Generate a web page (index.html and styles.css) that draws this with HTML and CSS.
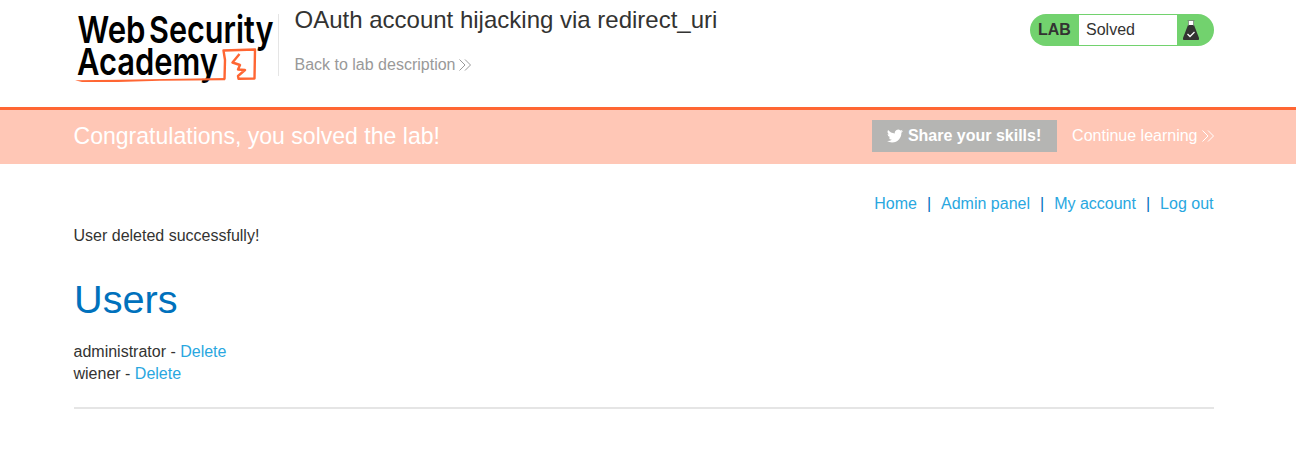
FILE: index.html
```html
<!DOCTYPE html>
<html lang="en">
<head>
<meta charset="utf-8">
<title>OAuth account hijacking via redirect_uri</title>
<link rel="stylesheet" href="styles.css">
</head>
<body>
<header class="lab-header">
  <div class="container header-row">
    <svg class="logo" width="204" height="84" viewBox="74 3 204 84" role="img" aria-label="Web Security Academy">
      <g class="logo-text">
        <text x="77.500" y="42.500" textLength="68" lengthAdjust="spacingAndGlyphs">Web</text>
        <text x="149" y="42.500" textLength="124.500" lengthAdjust="spacingAndGlyphs">Security</text>
        <text x="77" y="75" textLength="141" lengthAdjust="spacingAndGlyphs">Academy</text>
      </g>
      <path class="logo-rule" d="M75 80.300 L120 79.800 L225 78 L225 80.200 L160 80.800 L118 82 L82 82 Z"/>
      <path class="logo-box" d="M224.500 79.500 L225 60 L223.500 50.500 L255 49.500 L254.500 78.500 L238.500 78.800 L238 76 L245 70 L238 69.500 L240 65 L232.500 62.500 L239.500 54"/>
    </svg>
    <div class="title-block">
      <h2>OAuth account hijacking via redirect_uri</h2>
      <a class="back" href="#">Back to lab description<svg class="chevrons" width="12" height="12" viewBox="0 0 12 12"><path d="M.5.5 6 6 .5 11.500M6 .5 11.500 6 6 11.500"/></svg></a>
    </div>
    <div class="status">
      <span class="status-label">LAB</span>
      <span class="status-value">Solved</span>
      <svg class="flask" width="16" height="20" viewBox="0 0 16 20"><path fill="#fff" d="M5.500 1h5v5h-5z"/><path fill="#333332" d="M5 5h6l5 13q.4 2-1.500 2h-13Q-.4 20 0 18z"/><path fill="none" stroke="#777" stroke-width=".7" d="M4.500.5h7M5.500 1v5M10.500 1v5"/><path fill="none" stroke="#fff" stroke-width="1.300" d="M4.500 14 7 16.500 11.500 12"/></svg>
    </div>
  </div>
</header>
<section class="banner">
  <div class="container banner-row">
    <h4>Congratulations, you solved the lab!</h4>
    <a class="share" href="#"><svg width="16" height="16" viewBox="0 0 24 24"><path fill="#fff" d="M23.950 4.570a10 10 0 0 1-2.820.77 4.960 4.960 0 0 0 2.160-2.720c-.95.550-2 .95-3.130 1.180a4.920 4.920 0 0 0-8.380 4.480C7.690 8.100 4.070 6.130 1.640 3.160a4.930 4.930 0 0 0 1.520 6.570 4.900 4.900 0 0 1-2.230-.61v.06a4.920 4.920 0 0 0 3.950 4.830 5 5 0 0 1-2.210.08 4.940 4.940 0 0 0 4.600 3.420A9.870 9.870 0 0 1 0 19.540a13.990 13.990 0 0 0 7.550 2.210c9.050 0 14-7.500 14-13.980 0-.21 0-.42-.02-.63a9.940 9.940 0 0 0 2.460-2.550z"/></svg><span>Share your skills!</span></a>
    <a class="continue" href="#">Continue learning<svg class="chevrons" width="12" height="12" viewBox="0 0 12 12"><path d="M.5.5 6 6 .5 11.500M6 .5 11.500 6 6 11.500"/></svg></a>
  </div>
</section>
<main class="container">
  <nav class="links"><a href="#">Home</a><i>|</i><a href="#">Admin panel</a><i>|</i><a href="#">My account</a><i>|</i><a href="#">Log out</a></nav>
  <p class="message">User deleted successfully!</p>
  <h1>Users</h1>
  <div class="user">administrator - <a href="#">Delete</a></div>
  <div class="user">wiener - <a href="#">Delete</a></div>
  <hr>
</main>
</body>
</html>
```
FILE: styles.css
```css
* { box-sizing: border-box; }
body { margin: 0; background: #fff; color: #333332; font: 16px/22px "Liberation Sans", Arial, sans-serif; overflow: hidden; }
a { color: #29a7df; text-decoration: none; }
h1, h2, h4, p { margin: 0; font-weight: 400; }
.container { width: 1140px; margin-left: 74px; }
.lab-header { height: 107px; }
.header-row { display: flex; align-items: flex-start; }
.logo { margin-top: 3px; flex: none; overflow: visible; }
.logo-text { font-family: Inter, sans-serif; font-size: 37.5px; font-weight: 600; fill: #000; }
.logo-rule { fill: #ff6633; }
.logo-box { fill: none; stroke: #ff6633; stroke-width: 2.4; stroke-linejoin: round; }
.title-block { position: relative; flex: 1; padding: 5px 0 0 16.5px; }
.title-block::before { content: ""; position: absolute; left: 0; top: 14px; width: 1px; height: 62px; background: #e5e5e5; }
.title-block h2 { font-size: 24px; line-height: 30px; }
.back { display: flex; align-items: center; margin-top: 19px; color: #999; }
.chevrons { fill: none; stroke: currentColor; stroke-width: 1; margin-left: 4px; }
.status { display: flex; align-items: center; width: 184px; height: 32px; margin-top: 14px; border-radius: 16px; background: #72d26e; }
.status-label { width: 49px; padding-left: 8px; font-weight: 700; }
.status-value { width: 98px; height: 30px; padding-left: 7px; line-height: 30px; background: #fff; }
.flask { margin-left: 6px; }
.banner { height: 57px; border-top: 3px solid #ff6633; background: #ffc7b6; }
.banner-row { display: flex; align-items: center; height: 52px; color: #fff; }
.banner h4 { flex: 1; margin-left: -0.5px; font-size: 23.05px; }
.share { display: flex; align-items: center; justify-content: center; gap: 5px; width: 185px; height: 32px; background: #b5b5b3; color: #fff; font-weight: 700; }
.continue { display: flex; align-items: center; margin-left: 15.5px; color: #fff; }
.continue .chevrons { margin-left: 4.5px; }
.links { display: flex; justify-content: flex-end; padding: 29px 0.5px 0 0; }
.links i { margin: 0 10px; font-style: normal; color: #0071bc; }
.message { margin-top: 10px; }
h1 { margin-top: 28px; font-size: 39.7px; line-height: 48px; color: #0071bc; }
.user:first-of-type { margin-top: 18px; }
.message, .user { margin-left: -0.5px; }
hr { height: 2px; margin: 22px 0 0; border: 0; background: #e5e5e5; }
```
